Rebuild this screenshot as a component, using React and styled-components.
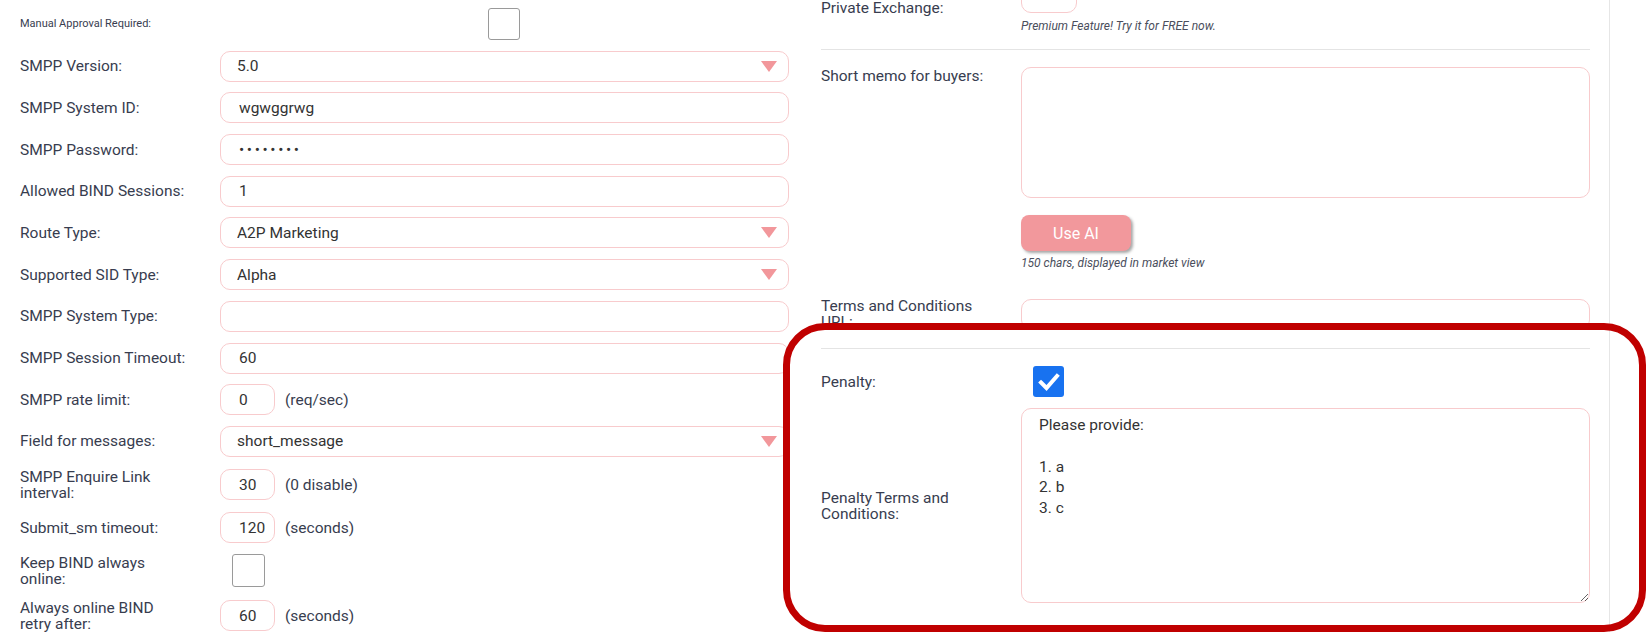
import React from 'react'
import styled, { createGlobalStyle } from 'styled-components'

const GlobalStyle = createGlobalStyle`
  html, body {
    margin: 0;
    padding: 0;
    background: #fff;
    overflow: hidden;
  }
  body {
    font-family: Roboto, "Open Sans", sans-serif;
    color: #383d4f;
  }
`

const Page = styled.div`
  position: relative;
  display: flex;
  align-items: flex-start;
  width: 1646px;
  height: 632px;
  overflow: hidden;
`

const LeftColumn = styled.div`
  width: 769px;
  padding: 8px 0 0 20px;
  display: flex;
  flex-direction: column;
  gap: 10.7px;
`

const RightColumn = styled.div`
  margin: -18px 0 0 32px;
  width: 769px;
  height: 700px;
  padding-right: 19px;
  border-right: 1px solid #e6e6e6;
  display: flex;
  flex-direction: column;
`

const Row = styled.div`
  display: flex;
  align-items: ${p => (p.$top ? 'flex-start' : 'center')};
  min-height: ${p => p.$h || 31}px;
  margin-top: ${p => p.$mt || 0}px;
`

const Label = styled.div`
  flex: none;
  width: 200px;
  box-sizing: border-box;
  padding: ${p => (p.$top ? '1px' : '0')} 20px 0 0;
  font-size: ${p => (p.$small ? '11px' : '15.5px')};
  line-height: 16px;
  color: #383d4f;
  white-space: nowrap;
`

const Field = styled.div`
  flex: 1;
  display: flex;
  align-items: center;
  gap: 10px;
  min-width: 0;
`

const Stack = styled.div`
  width: ${p => (p.$full ? '100%' : 'auto')};
  display: flex;
  flex-direction: column;
  align-items: flex-start;
`

const TextInput = styled.input`
  box-sizing: border-box;
  width: ${p => (p.$w ? `${p.$w}px` : '100%')};
  height: 31px;
  border: 1px solid #f8cbcd;
  border-radius: 10px;
  padding: ${p => (p.$w ? '0 3px 0 18px' : '0 17px 0 18px')};
  font-family: inherit;
  font-size: 15.5px;
  letter-spacing: ${p => (p.$secret ? '2.6px' : 'normal')};
  color: #333;
  background: #fff;
  outline: none;
`

const SelectWrap = styled.div`
  position: relative;
  width: 100%;

  &::after {
    content: '';
    position: absolute;
    right: 12px;
    top: 10px;
    border-left: 8.5px solid transparent;
    border-right: 8.5px solid transparent;
    border-top: 11px solid #f2979b;
    pointer-events: none;
  }
`

const Select = styled.select`
  display: block;
  box-sizing: border-box;
  width: 100%;
  height: 31px;
  border: 1px solid #f8cbcd;
  border-radius: 10px;
  padding: 0 16px;
  font-family: inherit;
  font-size: 15.5px;
  color: #333;
  background: #fff;
  appearance: none;
  outline: none;
`

const Unit = styled.span`
  font-size: 15.5px;
  color: #383d4f;
`

const Box = styled.span`
  display: inline-flex;
  align-items: center;
  justify-content: center;
  box-sizing: border-box;
  width: ${p => p.$size || 32}px;
  height: ${p => p.$size || 32}px;
  margin-left: ${p => p.$ml || 0}px;
  border-radius: 3px;
  border: ${p => (p.$checked ? 'none' : '1.5px solid #9a9a9a')};
  background: ${p => (p.$checked ? '#1872f0' : '#fff')};
`

const Note = styled.div`
  margin-top: ${p => p.$mt || 0}px;
  font-size: 12px;
  line-height: 14px;
  font-style: italic;
  color: #4a4e5c;
`

const Divider = styled.div`
  height: 1px;
  background: #e4e4e4;
  margin: ${p => p.$mt}px 0 ${p => p.$mb}px;
`

const TextArea = styled.textarea`
  display: block;
  box-sizing: border-box;
  width: 100%;
  height: ${p => p.$h}px;
  border: 1px solid #f8cbcd;
  border-radius: 10px;
  padding: 6px 17px;
  font-family: inherit;
  font-size: 15.5px;
  line-height: 20.8px;
  color: #333;
  background: #fff;
  outline: none;
  resize: ${p => (p.$fixed ? 'none' : 'both')};
`

const AiButton = styled.button`
  margin-top: 17px;
  width: 110px;
  height: 36px;
  border: none;
  border-radius: 8px;
  background: #f2989c;
  color: #fff;
  font-family: inherit;
  font-size: 16px;
  box-shadow: 2px 2px 3px rgba(0, 0, 0, 0.35);
`

const Highlight = styled.div`
  position: absolute;
  left: 783px;
  top: 323px;
  width: 863px;
  height: 309px;
  box-sizing: border-box;
  border: 7px solid #c00000;
  border-radius: 42px;
  pointer-events: none;
`

const Checkbox = ({ checked, size, ml }) => (
  <Box $checked={checked} $size={size} $ml={ml}>
    {checked && (
      <svg width="22" height="22" viewBox="0 0 22 22">
        <path d="M3 11.5 L8.5 17 L19 5" fill="none" stroke="#fff" strokeWidth="4" strokeLinecap="square" />
      </svg>
    )}
  </Box>
)

const Dropdown = ({ value, options }) => (
  <SelectWrap>
    <Select defaultValue={value}>
      {options.map(o => (
        <option key={o}>{o}</option>
      ))}
    </Select>
  </SelectWrap>
)

const penaltyText = 'Please provide:\n\n1. a\n2. b\n3. c'

export default function App() {
  return (
    <Page>
      <GlobalStyle />
      <LeftColumn>
        <Row $h={32}>
          <Label $small>Manual Approval Required:</Label>
          <Field>
            <Checkbox ml={268} />
          </Field>
        </Row>
        <Row>
          <Label>SMPP Version:</Label>
          <Field><Dropdown value="5.0" options={['3.4', '5.0']} /></Field>
        </Row>
        <Row>
          <Label>SMPP System ID:</Label>
          <Field><TextInput defaultValue="wgwggrwg" /></Field>
        </Row>
        <Row>
          <Label>SMPP Password:</Label>
          <Field><TextInput type="password" $secret defaultValue="wgwggrwg" /></Field>
        </Row>
        <Row>
          <Label>Allowed BIND Sessions:</Label>
          <Field><TextInput defaultValue="1" /></Field>
        </Row>
        <Row>
          <Label>Route Type:</Label>
          <Field><Dropdown value="A2P Marketing" options={['A2P Marketing', 'A2P Transactional']} /></Field>
        </Row>
        <Row>
          <Label>Supported SID Type:</Label>
          <Field><Dropdown value="Alpha" options={['Alpha', 'Numeric']} /></Field>
        </Row>
        <Row>
          <Label>SMPP System Type:</Label>
          <Field><TextInput defaultValue="" /></Field>
        </Row>
        <Row>
          <Label>SMPP Session Timeout:</Label>
          <Field><TextInput defaultValue="60" /></Field>
        </Row>
        <Row>
          <Label>SMPP rate limit:</Label>
          <Field>
            <TextInput $w={55} defaultValue="0" />
            <Unit>(req/sec)</Unit>
          </Field>
        </Row>
        <Row>
          <Label>Field for messages:</Label>
          <Field><Dropdown value="short_message" options={['short_message', 'message_payload']} /></Field>
        </Row>
        <Row $h={34}>
          <Label>SMPP Enquire Link<br />interval:</Label>
          <Field>
            <TextInput $w={55} defaultValue="30" />
            <Unit>(0 disable)</Unit>
          </Field>
        </Row>
        <Row>
          <Label>Submit_sm timeout:</Label>
          <Field>
            <TextInput $w={55} defaultValue="120" />
            <Unit>(seconds)</Unit>
          </Field>
        </Row>
        <Row $h={34}>
          <Label>Keep BIND always<br />online:</Label>
          <Field>
            <Checkbox size={33} ml={12} />
          </Field>
        </Row>
        <Row $h={34}>
          <Label>Always online BIND<br />retry after:</Label>
          <Field>
            <TextInput $w={55} defaultValue="60" />
            <Unit>(seconds)</Unit>
          </Field>
        </Row>
      </LeftColumn>

      <RightColumn>
        <Row>
          <Label>Private Exchange:</Label>
          <Field>
            <Stack>
              <TextInput $w={56} defaultValue="" />
              <Note $mt={6}>Premium Feature! Try it for FREE now.</Note>
            </Stack>
          </Field>
        </Row>
        <Divider $mt={16} $mb={17} />
        <Row $top>
          <Label $top>Short memo for buyers:</Label>
          <Field>
            <Stack $full>
              <TextArea $h={131} $fixed defaultValue="" />
              <AiButton>Use AI</AiButton>
              <Note $mt={5}>150 chars, displayed in market view</Note>
            </Stack>
          </Field>
        </Row>
        <Row $mt={28} $h={32}>
          <Label>Terms and Conditions<br />URL:</Label>
          <Field><TextInput defaultValue="" /></Field>
        </Row>
        <Divider $mt={18} $mb={17} />
        <Row>
          <Label>Penalty:</Label>
          <Field>
            <Checkbox checked size={31} ml={12} />
          </Field>
        </Row>
        <Row $mt={11}>
          <Label>Penalty Terms and<br />Conditions:</Label>
          <Field><TextArea $h={195} defaultValue={penaltyText} /></Field>
        </Row>
      </RightColumn>

      <Highlight />
    </Page>
  )
}
